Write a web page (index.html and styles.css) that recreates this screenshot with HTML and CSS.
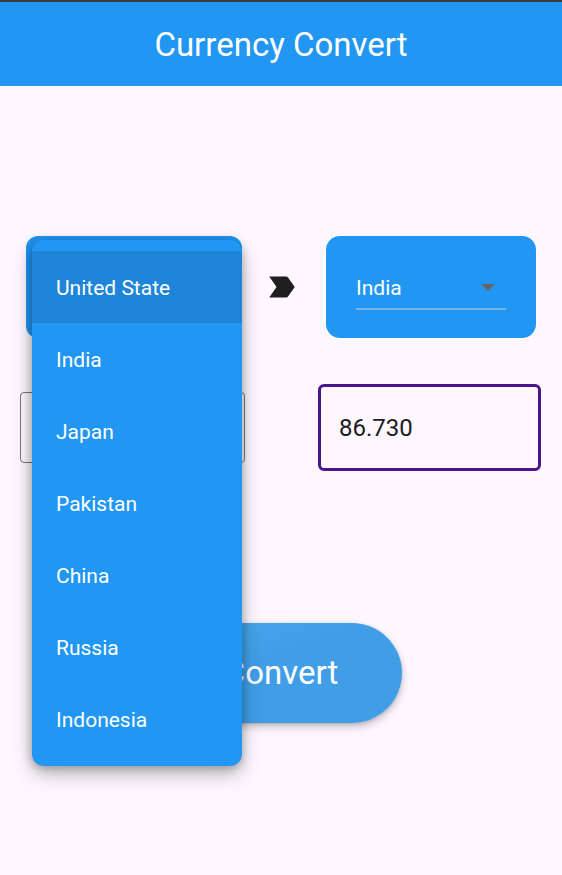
FILE: index.html
```html
<!DOCTYPE html>
<html>
<head>
<meta charset="utf-8">
<link rel="stylesheet" href="styles.css">
</head>
<body>
<div class="status"></div>
<header class="appbar"><h1 class="title">Currency Convert</h1></header>
<main class="content">
  <div class="row-select">
    <div class="select-box select-left">
      <div class="dropdown">
        <span class="dropdown-text">United State</span>
        <span class="caret"></span>
      </div>
    </div>
    <svg class="swap-icon" viewBox="0 0 24 24" width="36" height="36" aria-hidden="true">
      <path d="M3.5 18.99l11 .01c.67 0 1.27-.33 1.63-.84L20.5 12l-4.37-6.16c-.36-.51-.96-.84-1.63-.84l-11 .01L8.34 12 3.5 18.99z" fill="#1f1f1f"/>
    </svg>
    <div class="select-box select-right">
      <div class="dropdown">
        <span class="dropdown-text">India</span>
        <span class="caret"></span>
      </div>
    </div>
  </div>
  <div class="row-fields">
    <div class="field field-left"></div>
    <div class="field field-right"><span class="field-value">86.730</span></div>
  </div>
  <div class="row-button">
    <button class="convert-btn">Convert</button>
  </div>
</main>
<ul class="menu">
  <li class="menu-item selected">United State</li>
  <li class="menu-item">India</li>
  <li class="menu-item">Japan</li>
  <li class="menu-item">Pakistan</li>
  <li class="menu-item">China</li>
  <li class="menu-item">Russia</li>
  <li class="menu-item">Indonesia</li>
</ul>
</body>
</html>
```
FILE: styles.css
```css
* { box-sizing: border-box; }
html, body {
  margin: 0;
  padding: 0;
}
body {
  width: 562px;
  height: 875px;
  overflow: hidden;
  background: #fef7ff;
  font-family: Roboto, "Noto Sans", sans-serif;
  position: relative;
}
.status {
  height: 2px;
  background: #3a3a3a;
}
.appbar {
  height: 84px;
  background: #2196f3;
  display: flex;
  align-items: center;
  justify-content: center;
}
.title {
  margin: 0;
  font-weight: 400;
  font-size: 33px;
  color: #ffffff;
  line-height: 1;
}
.content {
  display: flex;
  flex-direction: column;
}
.row-select {
  margin-top: 150px;
  display: flex;
  align-items: center;
  height: 102px;
}
.select-box {
  background: #2196f3;
  height: 102px;
  padding-left: 30px;
}
.select-left {
  margin-left: 26px;
  width: 216px;
  border-radius: 12px;
}
.select-right {
  margin-left: 26px;
  width: 210px;
  border-radius: 14px;
}
.swap-icon {
  margin-left: 22px;
  display: block;
}
.dropdown {
  margin-top: 36px;
  width: 150px;
  height: 38px;
  border-bottom: 2px solid #7ab4e6;
  display: flex;
  align-items: flex-start;
  justify-content: space-between;
}
.dropdown-text {
  font-size: 21px;
  line-height: 32px;
  color: #ffffff;
}
.caret {
  margin-top: 12px;
  margin-right: 11px;
  width: 0;
  height: 0;
  border-left: 7px solid transparent;
  border-right: 7px solid transparent;
  border-top: 7px solid #666666;
}
.row-fields {
  margin-top: 46px;
  display: flex;
  align-items: center;
  height: 87px;
}
.field {
  border-radius: 4px;
}
.field-left {
  margin-left: 20px;
  width: 225px;
  height: 71px;
  border: 1px solid #79747e;
}
.field-right {
  margin-left: 73px;
  width: 223px;
  height: 87px;
  border: 3px solid #4a148c;
  border-radius: 6px;
  padding-left: 18px;
  display: flex;
  align-items: center;
}
.field-value {
  font-size: 24px;
  color: #1d1b20;
  line-height: 1;
}
.row-button {
  margin-top: 152px;
  display: flex;
  justify-content: center;
}
.convert-btn {
  width: 242px;
  height: 100px;
  border: none;
  border-radius: 50px;
  background: linear-gradient(160deg, #4aa7ee 0%, #409ee6 40%, #409ee6 100%);
  color: #ffffff;
  font-family: Roboto, "Noto Sans", sans-serif;
  font-size: 33px;
  font-weight: 400;
  box-shadow: 0 4px 8px rgba(0, 0, 0, 0.22), 0 1px 3px rgba(0, 0, 0, 0.15);
  padding: 0 0 2px 0;
}
.menu {
  position: absolute;
  left: 32px;
  top: 240px;
  width: 210px;
  margin: 0;
  padding: 11px 0 11px 0;
  list-style: none;
  background: #2196f3;
  border-radius: 12px;
  box-shadow: 0 8px 20px rgba(0, 0, 0, 0.26), 0 3px 8px rgba(0, 0, 0, 0.16), -2px 0 12px rgba(0, 0, 0, 0.1);
}
.menu-item {
  height: 72px;
  display: flex;
  align-items: center;
  padding-left: 24px;
  padding-top: 1px;
  font-size: 21px;
  color: #ffffff;
}
.menu-item.selected {
  background: #1e85d8;
}
```
